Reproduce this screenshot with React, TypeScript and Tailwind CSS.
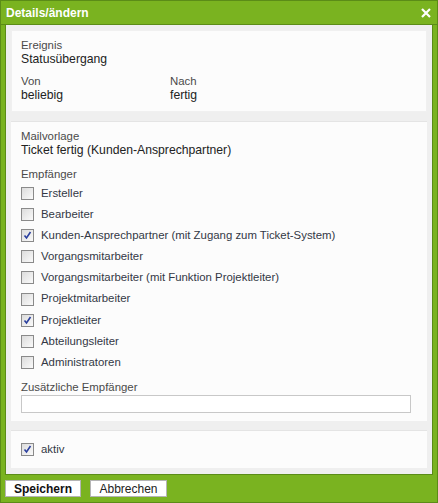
import React from "react";

type Empf = { label: string; checked: boolean };

const empfaenger: Empf[] = [
  { label: "Ersteller", checked: false },
  { label: "Bearbeiter", checked: false },
  { label: "Kunden-Ansprechpartner (mit Zugang zum Ticket-System)", checked: true },
  { label: "Vorgangsmitarbeiter", checked: false },
  { label: "Vorgangsmitarbeiter (mit Funktion Projektleiter)", checked: false },
  { label: "Projektmitarbeiter", checked: false },
  { label: "Projektleiter", checked: true },
  { label: "Abteilungsleiter", checked: false },
  { label: "Administratoren", checked: false },
];

function Check({ checked }: { checked: boolean }) {
  return (
    <span className="w-[13px] h-[13px] border border-[#8a8a8a] bg-gradient-to-br from-[#dcdcdc] to-[#fafafa] flex items-center justify-center shrink-0">
      {checked && (
        <svg width="9" height="9" viewBox="0 0 9 9">
          <path d="M1.5 4.5 L3.5 7 L7.5 1" stroke="#2a3f9e" strokeWidth="1.6" fill="none" />
        </svg>
      )}
    </span>
  );
}

export default function App() {
  return (
    <div className="w-[438px] h-[503px] bg-[#7ab320] border border-[#5b8c17] flex flex-col font-['Liberation_Sans',Arial,sans-serif]">
      <div className="h-[24px] flex items-center justify-between pl-[5px] pr-[6px] border-b border-[#5b8c17]">
        <span className="text-white font-bold text-[12px]">Details/ändern</span>
        <svg width="10" height="10" viewBox="0 0 10 10">
          <path d="M1 1 L9 9 M9 1 L1 9" stroke="white" strokeWidth="2.2" />
        </svg>
      </div>
      <div className="mx-[4px] border-x border-[#5b8c17] border-b bg-[#efefef] flex-1 pt-[5px] px-[5px] pb-[4px] flex flex-col gap-[9px]">
        <div className="bg-[#fcfcfc] border border-[#f0f0f0] px-[9px] pt-[8px] h-[82px]">
          <div className="text-[11.4px] text-[#4a4a4a] leading-[13px]">Ereignis</div>
          <div className="text-[12.2px] text-[#222] leading-[15px]">Statusübergang</div>
          <div className="flex mt-[8px]">
            <div className="w-[149px]">
              <div className="text-[11.4px] text-[#4a4a4a] leading-[13px]">Von</div>
              <div className="text-[12.2px] text-[#222] leading-[15px]">beliebig</div>
            </div>
            <div>
              <div className="text-[11.4px] text-[#4a4a4a] leading-[13px]">Nach</div>
              <div className="text-[12.2px] text-[#222] leading-[15px]">fertig</div>
            </div>
          </div>
        </div>
        <div className="bg-[#fcfcfc] border-t border-[#e4e4e4] px-[10px] pt-[8px] h-[300px]">
          <div className="text-[11.4px] text-[#4a4a4a] leading-[13px]">Mailvorlage</div>
          <div className="text-[12.2px] text-[#222] leading-[15px]">Ticket fertig (Kunden-Ansprechpartner)</div>
          <div className="text-[11.4px] text-[#4a4a4a] leading-[13px] mt-[10px]">Empfänger</div>
          <div className="flex flex-col mt-[2px]">
            {empfaenger.map((e) => (
              <div key={e.label} className="flex items-center gap-[7px] h-[21.1px]">
                <Check checked={e.checked} />
                <span className="text-[11.4px] text-[#333845]">{e.label}</span>
              </div>
            ))}
          </div>
          <div className="text-[11.4px] text-[#4a4a4a] leading-[13px] mt-[8px]">Zusätzliche Empfänger</div>
          <div className="mt-[1px] w-[390px] h-[18px] bg-white border border-[#c8c8c8]" />
        </div>
        <div className="bg-[#fcfcfc] border-t border-[#e4e4e4] px-[10px] h-[38px] flex items-center">
          <div className="flex items-center gap-[7px]">
            <Check checked />
            <span className="text-[11.4px] text-[#333845]">aktiv</span>
          </div>
        </div>
      </div>
      <div className="flex gap-[9px] pl-[4px] pt-[5px] h-[27px]">
        <button className="w-[76px] h-[17px] bg-white border border-[#b5b5b5] text-[12px] font-bold text-[#111] leading-none">
          Speichern
        </button>
        <button className="w-[77px] h-[17px] bg-white border border-[#b5b5b5] text-[12px] text-[#222] leading-none">
          Abbrechen
        </button>
      </div>
    </div>
  );
}
